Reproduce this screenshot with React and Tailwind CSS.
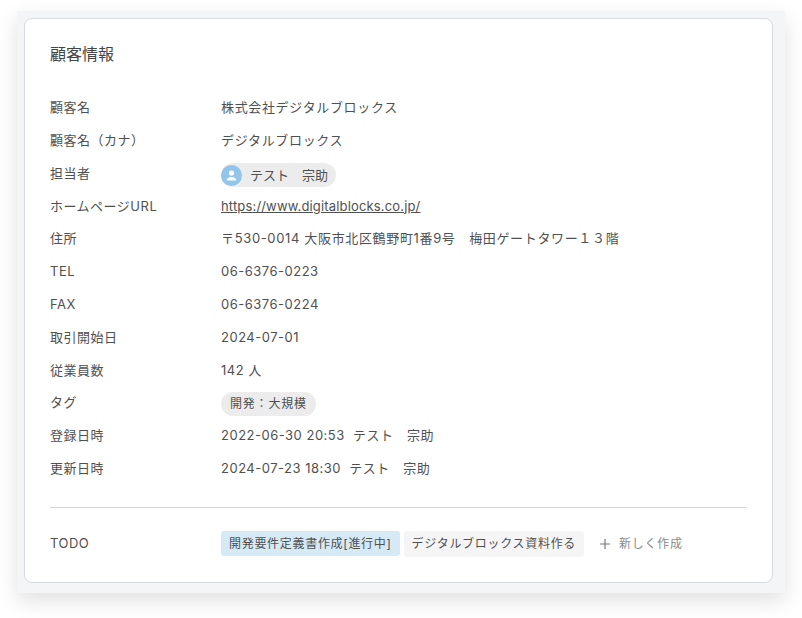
const font = "font-['Inter','Noto_Sans_CJK_JP',sans-serif]";

const rows = [
  { label: '顧客名', value: '株式会社デジタルブロックス', wide: true },
  { label: '顧客名（カナ）', value: 'デジタルブロックス', wide: true },
  { label: '担当者', type: 'user' },
  { label: 'ホームページURL', type: 'link' },
  { label: '住所', value: '〒530-0014 大阪市北区鶴野町1番9号　梅田ゲートタワー１３階', wide: true },
  { label: 'TEL', value: '06-6376-0223' },
  { label: 'FAX', value: '06-6376-0224' },
  { label: '取引開始日', value: '2024-07-01' },
  { label: '従業員数', value: '142 人' },
  { label: 'タグ', type: 'tag' },
  { label: '登録日時', value: '2022-06-30 20:53  テスト　宗助' },
  { label: '更新日時', value: '2024-07-23 18:30  テスト　宗助' },
];

function Value({ row }) {
  if (row.type === 'user') {
    return (
      <div className="pt-[4px]">
        <span className="inline-flex h-6 items-center gap-[8px] rounded-full bg-[#ececec] pr-[8px] tracking-normal">
          <span className="flex h-[21px] w-[21px] items-center justify-center rounded-full bg-[#92c5e8]">
            <svg width="13" height="13" viewBox="0 0 13 13" fill="#ffffff">
              <circle cx="6.5" cy="4" r="2.6" />
              <path d="M1.6 11.5c0-2.4 2.3-3.6 4.9-3.6s4.9 1.2 4.9 3.6z" />
            </svg>
          </span>
          <span>テスト　宗助</span>
        </span>
      </div>
    );
  }
  if (row.type === 'link') {
    return <a className="tracking-[0.16px] underline" href="#">https://www.digitalblocks.co.jp/</a>;
  }
  if (row.type === 'tag') {
    return (
      <div className="pt-[2px]">
        <span className="inline-flex h-6 items-center rounded-full bg-[#ececec] px-[9px] text-[12px] tracking-[0.8px]">開発：大規模</span>
      </div>
    );
  }
  return <span className={row.wide ? 'whitespace-pre tracking-[0.65px]' : 'whitespace-pre'}>{row.value}</span>;
}

export default function App() {
  return (
    <div className={`h-[618px] w-[802px] overflow-hidden bg-white pl-[17px] pt-[11px] text-[13px] tracking-[0.5px] text-[#505050] ${font}`}>
      <div className="h-[582px] w-[768px] bg-[#f3f5f7] pb-[10px] pl-[7px] pr-[12px] pt-[7px] shadow-[0_8px_20px_rgba(0,0,0,0.12)]">
        <div className="h-[565px] rounded-lg border border-[#d9dcdf] bg-white px-[25px]">
          <h2 className="pt-[24px] text-[16px] leading-[22px] tracking-normal text-[#444444]">顧客情報</h2>
          <dl className="mt-[26.5px]">
            {rows.map((row) => (
              <div key={row.label} className="flex h-[32.8px] items-center">
                <dt className="w-[171px] shrink-0">{row.label}</dt>
                <dd><Value row={row} /></dd>
              </div>
            ))}
          </dl>
          <div className="mt-[21.5px] border-t border-[#d6d6d6]" />
          <div className="mt-[23px] flex items-center">
            <div className="w-[171px] shrink-0">TODO</div>
            <div className="flex items-center text-[12px] tracking-[0.7px]">
              <span className="flex h-[25px] items-center rounded-[3px] bg-[#d6eaf5] px-[8px]">開発要件定義書作成[進行中]</span>
              <span className="ml-[4px] flex h-[26px] items-center rounded-[3px] bg-[#f5f5f5] px-[8px]">デジタルブロックス資料作る</span>
              <span className="ml-[15px] flex items-center gap-[8px] text-[#8a8a8a]">
                <svg width="12" height="12" viewBox="0 0 12 12" stroke="#777777" strokeWidth="1.2" fill="none">
                  <path d="M6 1v10M1 6h10" />
                </svg>
                新しく作成
              </span>
            </div>
          </div>
        </div>
      </div>
    </div>
  );
}
